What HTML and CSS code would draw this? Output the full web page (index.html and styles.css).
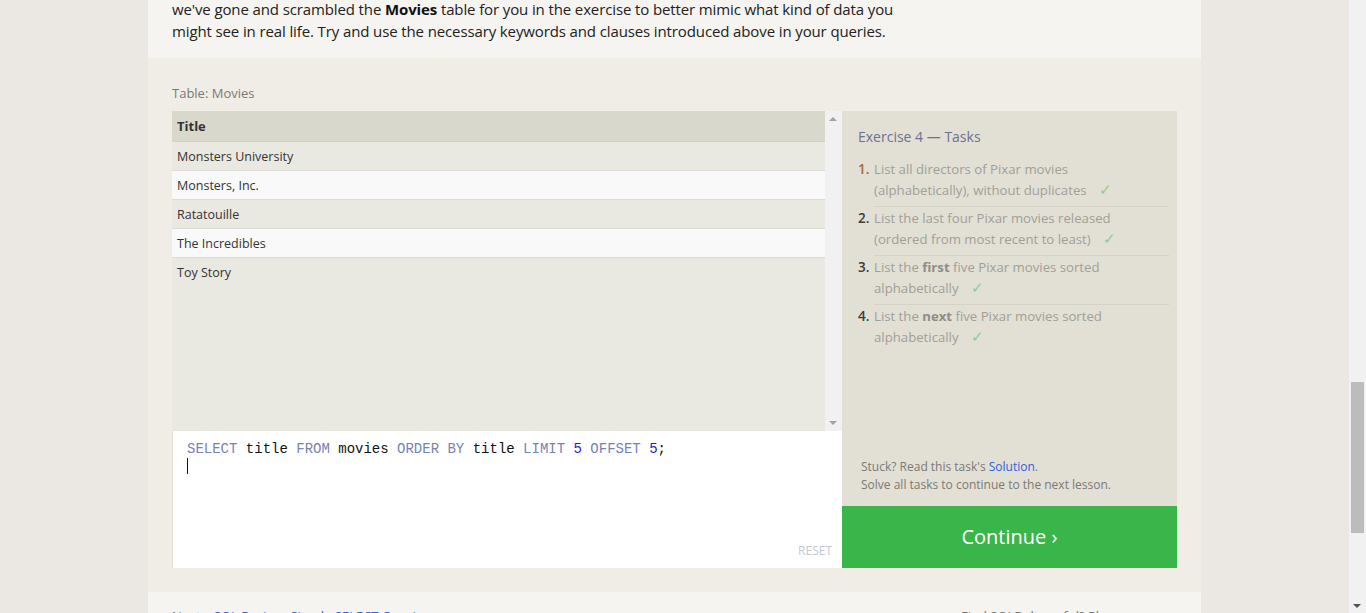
FILE: index.html
```html
<!DOCTYPE html>
<html>
<head>
<meta charset="utf-8">
<link rel="stylesheet" href="styles.css">
</head>
<body>
<div class="page">
  <section class="intro">
    <p>we've gone and scrambled the <b>Movies</b> table for you in the exercise to better mimic what kind of data you might see in real life. Try and use the necessary keywords and clauses introduced above in your queries.</p>
  </section>
  <section class="exercise">
    <div class="table-label">Table: Movies</div>
    <div class="ex-grid">
      <div class="left">
        <div class="table-wrap">
          <div class="table-view">
            <div class="row head">Title</div>
            <div class="row odd">Monsters University</div>
            <div class="row even">Monsters, Inc.</div>
            <div class="row odd">Ratatouille</div>
            <div class="row even">The Incredibles</div>
            <div class="row odd last">Toy Story</div>
          </div>
          <div class="vscroll">
            <span class="arr up"></span>
            <span class="arr down"></span>
          </div>
        </div>
        <div class="editor">
          <div class="code"><span class="kw">SELECT</span> title <span class="kw">FROM</span> movies <span class="kw">ORDER BY</span> title <span class="kw">LIMIT</span> <span class="num">5</span> <span class="kw">OFFSET</span> <span class="num">5</span>;</div>
          <div class="cursor"></div>
          <div class="reset">RESET</div>
        </div>
      </div>
      <div class="right">
        <div class="tasks">
          <h3>Exercise 4 — Tasks</h3>
          <ol>
            <li><span class="n cur">1.</span><span class="t">List all directors of Pixar movies (alphabetically), without duplicates <span class="chk">✓</span></span></li>
            <li><span class="n">2.</span><span class="t">List the last four Pixar movies released (ordered from most recent to least) <span class="chk">✓</span></span></li>
            <li><span class="n">3.</span><span class="t">List the <b>first</b> five Pixar movies sorted alphabetically <span class="chk">✓</span></span></li>
            <li><span class="n">4.</span><span class="t">List the <b>next</b> five Pixar movies sorted alphabetically <span class="chk">✓</span></span></li>
          </ol>
          <div class="stuck">
            <div>Stuck? Read this task's <a href="#">Solution</a>.</div>
            <div>Solve all tasks to continue to the next lesson.</div>
          </div>
        </div>
        <div class="continue">Continue ›</div>
      </div>
    </div>
  </section>
  <section class="footer">
    <div class="next">Next – <a href="#">SQL Review: Simple SELECT Queries</a></div>
    <div class="find">Find SQLBolt useful? Please consider <a href="#">Donating</a> to support our site.</div>
  </section>
</div>
<div class="pscroll">
  <div class="thumb"></div>
  <span class="parr"></span>
</div>
</body>
</html>
```
FILE: styles.css
```css
html, body {
  margin: 0;
  padding: 0;
  height: 613px;
  overflow: hidden;
}
body {
  background: #ebe7e3;
  font-family: "Open Sans", "Noto Sans", sans-serif;
}
.page {
  margin-left: 148px;
  width: 1053px;
}
.intro {
  background: #f5f4f0;
  height: 58px;
  padding: 0 24px;
  box-sizing: border-box;
  overflow: hidden;
}
.intro p {
  margin: -2px 0 0;
  font-size: 15px;
  letter-spacing: -0.12px;
  line-height: 22px;
  color: #222;
  width: 745px;
}
.intro b { color: #111; }
.exercise {
  background: #efede6;
  padding: 26px 24px 24px;
  height: 534px;
  box-sizing: border-box;
}
.table-label {
  font-size: 13px;
  color: #7c7a76;
  line-height: 18px;
  height: 27px;
}
.ex-grid {
  display: grid;
  grid-template-columns: 670px 335px;
}
.left {
  display: flex;
  flex-direction: column;
}
.table-wrap {
  height: 320px;
  display: flex;
  background: #eae9e1;
}
.table-view {
  flex: 1;
}
.row {
  height: 28px;
  line-height: 29px;
  padding-left: 5px;
  font-size: 12.5px;
  color: #333;
  border-bottom: 1px solid #dcdbd4;
}
.row.head {
  background: #d9d8cc;
  font-weight: bold;
  font-size: 13px;
  height: 30px;
  line-height: 31px;
  border-bottom: 1px solid #d2d1c5;
  color: #333;
}
.row.odd { background: #eae9e1; }
.row.even { background: #f9f9f9; }
.row.last { border-bottom: none; }
.vscroll {
  width: 17px;
  background: #f1f1f1;
  position: relative;
}
.arr {
  position: absolute;
  left: 4px;
  width: 0;
  height: 0;
  border-left: 4px solid transparent;
  border-right: 4px solid transparent;
}
.arr.up { top: 6px; border-bottom: 4px solid #a3a3a3; }
.arr.down { bottom: 6px; border-top: 4px solid #a3a3a3; }
.editor {
  height: 137px;
  background: #fff;
  border-left: 1px solid #e3e1d9;
  box-sizing: border-box;
  position: relative;
  padding: 10px 0 0 14px;
}
.code {
  font-family: "Liberation Mono", "DejaVu Sans Mono", monospace;
  font-size: 14px;
  line-height: 16px;
  color: #111;
  white-space: pre;
}
.kw { color: #7682b5; }
.num { color: #1e1ed4; }
.cursor {
  width: 1px;
  height: 16px;
  background: #111;
  margin-top: 1px;
}
.reset {
  position: absolute;
  right: 10px;
  bottom: 9px;
  font-size: 12px;
  color: #c5c8d2;
}
.right {
  display: flex;
  flex-direction: column;
}
.tasks {
  height: 395px;
  background: #e2dfd5;
  padding: 16px 8px 0 16px;
  box-sizing: border-box;
  display: flex;
  flex-direction: column;
}
.tasks h3 {
  margin: 0 0 11px;
  font-size: 14px;
  font-weight: normal;
  color: #6c7290;
  line-height: 20px;
}
.tasks ol {
  list-style: none;
  margin: 0;
  padding: 0;
}
.tasks li {
  display: flex;
  font-size: 13.2px;
  line-height: 20.5px;
  color: #a19f99;
  padding: 1px 0 6px;
}
.n {
  width: 16px;
  flex: none;
  color: #3c3c3c;
  font-weight: 600;
  font-size: 13.5px;
}
.n.cur { color: #a36b2c; }
.t {
  flex: 1;
  padding-right: 40px;
}
.tasks li:not(:last-child) .t {
  border-bottom: 1px solid #d5d2c8;
  padding-bottom: 6px;
  margin-bottom: -6px;
}
.tasks li .t b { color: #8f8d88; }
.chk {
  color: #86cf8f;
  margin-left: 9px;
  font-size: 15px;
  line-height: 1;
}
.stuck {
  margin-top: auto;
  padding: 0 0 12px 3px;
  font-size: 12px;
  line-height: 18px;
  color: #7c7a76;
}
.stuck a { color: #2f62df; text-decoration: none; }
.continue {
  height: 62px;
  background: #3ab54a;
  color: #fff;
  font-size: 20px;
  display: flex;
  align-items: center;
  justify-content: center;
  line-height: 1;
}
.footer {
  background: #f5f4f0;
  height: 40px;
  padding: 15px 24px 0;
  box-sizing: border-box;
  display: flex;
  justify-content: space-between;
  font-size: 13px;
  color: #777;
}
.footer a { color: #2f62df; text-decoration: none; }
.find {
  width: 216px;
  margin-right: 0;
}
.pscroll {
  position: fixed;
  right: 0;
  top: 0;
  width: 17px;
  height: 613px;
  background: #f1f1f1;
  border-left: 1px solid #e8e8e8;
}
.thumb {
  position: absolute;
  left: 2px;
  width: 13px;
  top: 382px;
  height: 151px;
  background: #bcbcbc;
}
.parr {
  position: absolute;
  left: 4px;
  bottom: 5px;
  width: 0;
  height: 0;
  border-left: 4px solid transparent;
  border-right: 4px solid transparent;
  border-top: 4px solid #505050;
}
```
